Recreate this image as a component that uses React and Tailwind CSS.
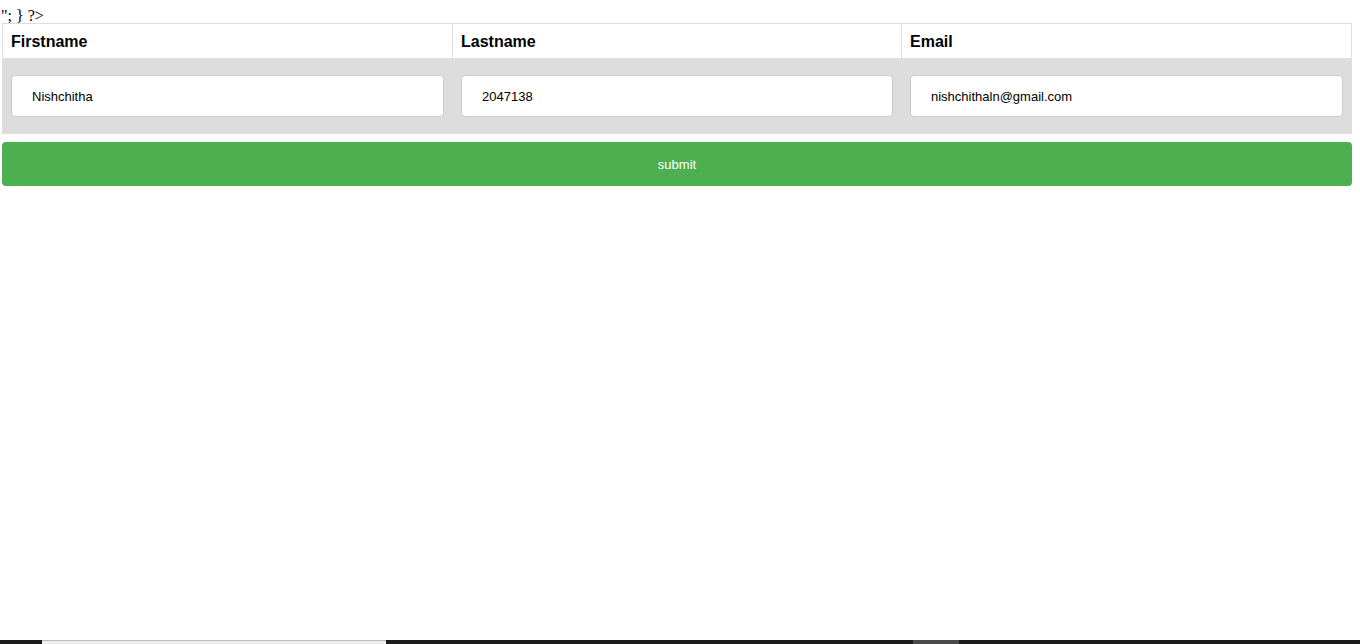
import React from 'react';

// 표 한 줄짜리 입력 폼
export default function App() {
  const cols = [
    { label: 'Firstname', value: 'Nishchitha' },
    { label: 'Lastname', value: '2047138' },
    { label: 'Email', value: 'nishchithaln@gmail.com' },
  ];

  return (
    <div className="flex flex-col h-[644px] bg-white overflow-hidden">
      <div className="h-[23px] pl-[1px] leading-[31px] text-[16px] text-black font-['Liberation_Serif',serif]">
        "; {'}'} ?&gt;
      </div>

      <form className="ml-[2px] w-[1350px] font-['Liberation_Sans',Arial,sans-serif]">
        <div className="border border-[#ddd]">
          {/* header */}
          <div className="grid grid-cols-[449px_449px_1fr] bg-white">
            {cols.map((c, i) => (
              <div
                key={c.label}
                className={`px-[8px] pt-[8px] pb-[7px] text-[16px] leading-[19px] font-bold text-black ${i > 0 ? 'border-l border-[#ddd]' : ''}`}
              >
                {c.label}
              </div>
            ))}
          </div>

          {/* body row */}
          <div className="grid grid-cols-[449px_449px_1fr] bg-[#ddd]">
            {cols.map((c, i) => (
              <div key={c.label} className={`pr-[8px] pt-[17px] pb-[16px] ${i > 0 ? 'pl-[9px]' : 'pl-[8px]'}`}>
                <input
                  type="text"
                  defaultValue={c.value}
                  className="block w-full h-[42px] px-[20px] bg-white border border-[#ccc] rounded-[4px] text-[13px] text-black outline-none"
                />
              </div>
            ))}
          </div>
        </div>

        <button
          type="button"
          className="mt-[8px] w-full h-[44px] pt-[1px] bg-[#4caf50] text-white text-[13px] rounded-[4px]"
        >
          submit
        </button>
      </form>

      {/* bottom taskbar strip */}
      <div className="mt-auto h-[4px] flex bg-[#1b1b1b]">
        <div className="w-[42px]" />
        <div className="w-[344px] bg-[#eeeeee] border-t border-[#bbb]" />
        <div className="w-[527px]" />
        <div className="w-[46px] bg-[#4a4a4a]" />
        <div className="flex-1" />
      </div>
    </div>
  );
}
